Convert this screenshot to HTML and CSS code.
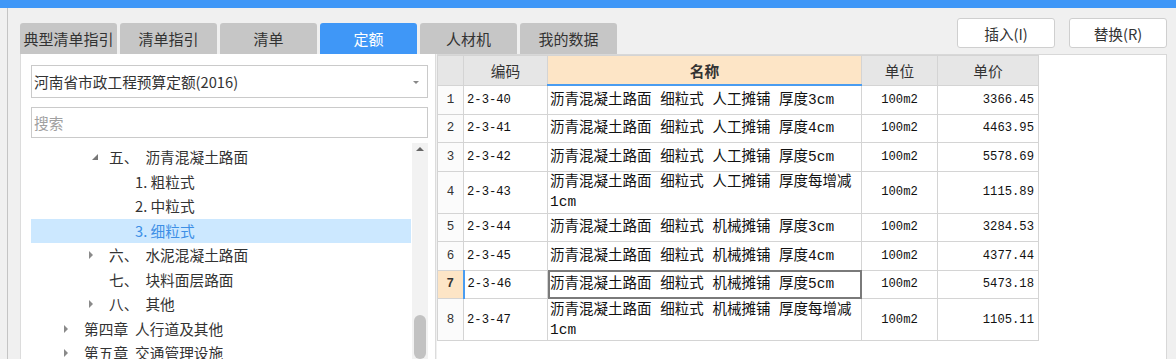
FILE: index.html
```html
<!DOCTYPE html>
<html>
	<head>
		<meta charset="utf-8">
		<title>定额</title>
		<link rel="stylesheet" href="styles.css">
	</head>
	<body>
		<div class="topbar"></div>
		<div id="frame">
			<div class="head">
				<div class="tabs">
					<div class="tab">典型清单指引</div>
					<div class="tab">清单指引</div>
					<div class="tab">清单</div>
					<div class="tab active">定额</div>
					<div class="tab">人材机</div>
					<div class="tab">我的数据</div>
				</div>
				<div class="btns">
					<button class="btn">插入(I)</button>
					<button class="btn">替换(R)</button>
				</div>
			</div>

			<div class="body">
				<div class="left">
					<div class="select">河南省市政工程预算定额(2016)<span class="caret"></span></div>
					<input class="search" type="text" placeholder="搜索">
					<div class="tree">
						<ul class="list">
							<li class="l2"><span class="tw open"></span><span class="no">五、</span>沥青混凝土路面</li>
							<li class="l3">1. 粗粒式</li>
							<li class="l3">2. 中粒式</li>
							<li class="l3 sel">3. 细粒式</li>
							<li class="l2"><span class="tw closed"></span><span class="no">六、</span>水泥混凝土路面</li>
							<li class="l2"><span class="tw"></span><span class="no">七、</span>块料面层路面</li>
							<li class="l2"><span class="tw closed"></span><span class="no">八、</span>其他</li>
							<li class="l1"><span class="tw closed"></span><span class="no">第四章</span>人行道及其他</li>
							<li class="l1"><span class="tw closed"></span><span class="no">第五章</span>交通管理设施</li>
						</ul>
						<div class="scroll">
							<div class="up"></div>
							<div class="thumb"></div>
						</div>
					</div>
				</div>

				<div class="right">
					<table class="grid">
						<colgroup>
							<col style="width:26px">
							<col style="width:84px">
							<col style="width:314px">
							<col style="width:76px">
							<col style="width:101px">
						</colgroup>
						<thead>
							<tr>
								<th></th>
								<th>编码</th>
								<th class="name">名称</th>
								<th>单位</th>
								<th>单价</th>
							</tr>
						</thead>
						<tbody>
							<tr>
								<td class="rn">1</td><td class="code">2-3-40</td>
								<td class="nm">沥青混凝土路面 细粒式 人工摊铺 厚度3cm</td>
								<td class="unit">100m2</td><td class="price">3366.45</td>
							</tr>
							<tr>
								<td class="rn">2</td><td class="code">2-3-41</td>
								<td class="nm">沥青混凝土路面 细粒式 人工摊铺 厚度4cm</td>
								<td class="unit">100m2</td><td class="price">4463.95</td>
							</tr>
							<tr>
								<td class="rn">3</td><td class="code">2-3-42</td>
								<td class="nm">沥青混凝土路面 细粒式 人工摊铺 厚度5cm</td>
								<td class="unit">100m2</td><td class="price">5578.69</td>
							</tr>
							<tr class="tall">
								<td class="rn">4</td><td class="code">2-3-43</td>
								<td class="nm">沥青混凝土路面 细粒式 人工摊铺 厚度每增减1cm</td>
								<td class="unit">100m2</td><td class="price">1115.89</td>
							</tr>
							<tr>
								<td class="rn">5</td><td class="code">2-3-44</td>
								<td class="nm">沥青混凝土路面 细粒式 机械摊铺 厚度3cm</td>
								<td class="unit">100m2</td><td class="price">3284.53</td>
							</tr>
							<tr>
								<td class="rn">6</td><td class="code">2-3-45</td>
								<td class="nm">沥青混凝土路面 细粒式 机械摊铺 厚度4cm</td>
								<td class="unit">100m2</td><td class="price">4377.44</td>
							</tr>
							<tr class="cur">
								<td class="rn">7</td><td class="code">2-3-46</td>
								<td class="nm">沥青混凝土路面 细粒式 机械摊铺 厚度5cm</td>
								<td class="unit">100m2</td><td class="price">5473.18</td>
							</tr>
							<tr class="tall">
								<td class="rn">8</td><td class="code">2-3-47</td>
								<td class="nm">沥青混凝土路面 细粒式 机械摊铺 厚度每增减1cm</td>
								<td class="unit">100m2</td><td class="price">1105.11</td>
							</tr>
						</tbody>
					</table>
				</div>
			</div>
		</div>
	</body>
</html>
```

FILE: styles.css
```css
body {
	margin: 0;
	height: 359px;
	overflow: hidden;
	background: #f0f0f0;
	font-family: "Noto Sans CJK SC", sans-serif;
	font-size: 14.7px;
	color: #333;
}

.topbar {
	height: 8px;
	background: #3f97f7;
}

#frame {
	margin-left: 7px;
	border-left: 1px solid #c4c4c4;
	padding: 0 9px 0 12px;
	height: 351px;
}

/* tabs + buttons */
.head {
	display: flex;
	justify-content: space-between;
	height: 46px;
}
.tabs {
	display: flex;
	align-items: flex-end;
	gap: 3px;
}
.tab {
	width: 97px;
	height: 31px;
	line-height: 32px;
	text-align: center;
	font-size: 15px;
	background: #c6c6c6;
	border-radius: 3px 3px 0 0;
	color: #333;
}
.tab.active {
	background: #3f97f7;
	color: #fff;
}
.btns {
	display: flex;
	gap: 14px;
	padding-top: 10px;
}
.btn {
	width: 98px;
	height: 30px;
	padding: 0;
	background: #fff;
	border: 1px solid #cfcfcf;
	border-radius: 3px;
	font: inherit;
	color: #333;
}

.body {
	display: flex;
	gap: 1px;
	height: 305px;
}

/* left tree panel */
.left {
	width: 416px;
	box-sizing: border-box;
	background: #fff;
	border-left: 1px solid #dcdcdc;
	border-right: 1px solid #dcdcdc;
	padding: 11px 7px 0 10px;
	display: flex;
	flex-direction: column;
}
.select {
	height: 33px;
	box-sizing: border-box;
	border: 1px solid #cacaca;
	display: flex;
	align-items: center;
	padding-left: 2px;
	position: relative;
}
.caret {
	position: absolute;
	right: 8px;
	top: 15px;
	border-left: 3px solid transparent;
	border-right: 3px solid transparent;
	border-top: 3px solid #888;
}
.search {
	margin-top: 9px;
	height: 31px;
	box-sizing: border-box;
	border: 1px solid #cacaca;
	padding: 0 2px;
	font: inherit;
	outline: none;
}
.search::placeholder {
	color: #a0a0a0;
}

.tree {
	margin-top: 5px;
	flex: 1;
	display: flex;
	gap: 1px;
	overflow: hidden;
}
.list {
	flex: 1;
	margin: 0;
	padding: 2px 0 0 0;
}
.list li {
	list-style-type: none;
	height: 24.5px;
	line-height: 24.5px;
	white-space: nowrap;
	color: #333;
	display: flex;
	align-items: center;
}
.list li.l1 { padding-left: 33px; }
.list li.l2 { padding-left: 58px; }
.list li.l3 { padding-left: 104px; }
.list li.sel {
	background: #cce8ff;
	color: #3d8fe6;
}
.no {
	margin-right: 7px;
}
.tw {
	width: 20px;
	height: 10px;
	flex: none;
	position: relative;
}
.tw.closed::before {
	content: "";
	position: absolute;
	left: 0;
	top: 1px;
	border-left: 4px solid #8a8a8a;
	border-top: 4px solid transparent;
	border-bottom: 4px solid transparent;
}
.tw.open::before {
	content: "";
	position: absolute;
	left: 3px;
	top: 2px;
	border-right: 6px solid #777;
	border-top: 6px solid transparent;
}

.scroll {
	width: 16px;
	background: #f2f2f2;
	display: flex;
	flex-direction: column;
	align-items: center;
}
.up {
	margin-top: 4px;
	border-left: 4px solid transparent;
	border-right: 4px solid transparent;
	border-bottom: 4px solid #666;
}
.thumb {
	margin-top: 164px;
	width: 12px;
	height: 80px;
	background: #c2c2c2;
	border-radius: 6px;
}

/* right grid panel */
.right {
	flex: 1;
	background: #fff;
	border-top: 1px solid #d8d8d8;
	border-right: 1px solid #d8d8d8;
}
.grid {
	border-collapse: collapse;
	table-layout: fixed;
	width: 601px;
	color: #111;
}
.grid th,
.grid td {
	border: 1px solid #d4d4d4;
	padding: 0;
	white-space: nowrap;
	overflow: hidden;
}
.grid th {
	height: 28px;
	background: #e6e6e6;
	font-weight: normal;
	color: #333;
	text-align: center;
}
.grid th.name {
	background: #fde5c6;
	font-weight: bold;
	border-bottom: 2px solid #4a9cf0;
}
.grid td {
	height: 27.5px;
}
.grid tr.tall td {
	height: 41px;
}
.grid td.rn {
	text-align: center;
	font-family: "Liberation Mono", monospace;
	font-size: 12.5px;
	background: #fbfbfb;
	color: #333;
}
.grid td.code,
.grid td.unit,
.grid td.price {
	font-family: "Liberation Mono", monospace;
	font-size: 12.2px;
}
.grid td.code {
	padding-left: 3px;
}
.grid td.unit {
	text-align: center;
}
.grid td.price {
	text-align: right;
	padding-right: 4px;
}
.grid td.nm {
	font-family: "Liberation Mono", "Noto Sans CJK SC", monospace;
	font-size: 14.5px;
	line-height: 20px;
	padding-left: 2px;
	white-space: normal;
}
.grid tr.cur td.rn {
	background: #fde5c6;
	font-weight: bold;
}
.grid tr.cur td.code {
	border-left: 2px solid #4a9cf0;
}
.grid tr.cur td.nm {
	outline: 2px solid #7a7a7a;
	outline-offset: -2px;
}
```
